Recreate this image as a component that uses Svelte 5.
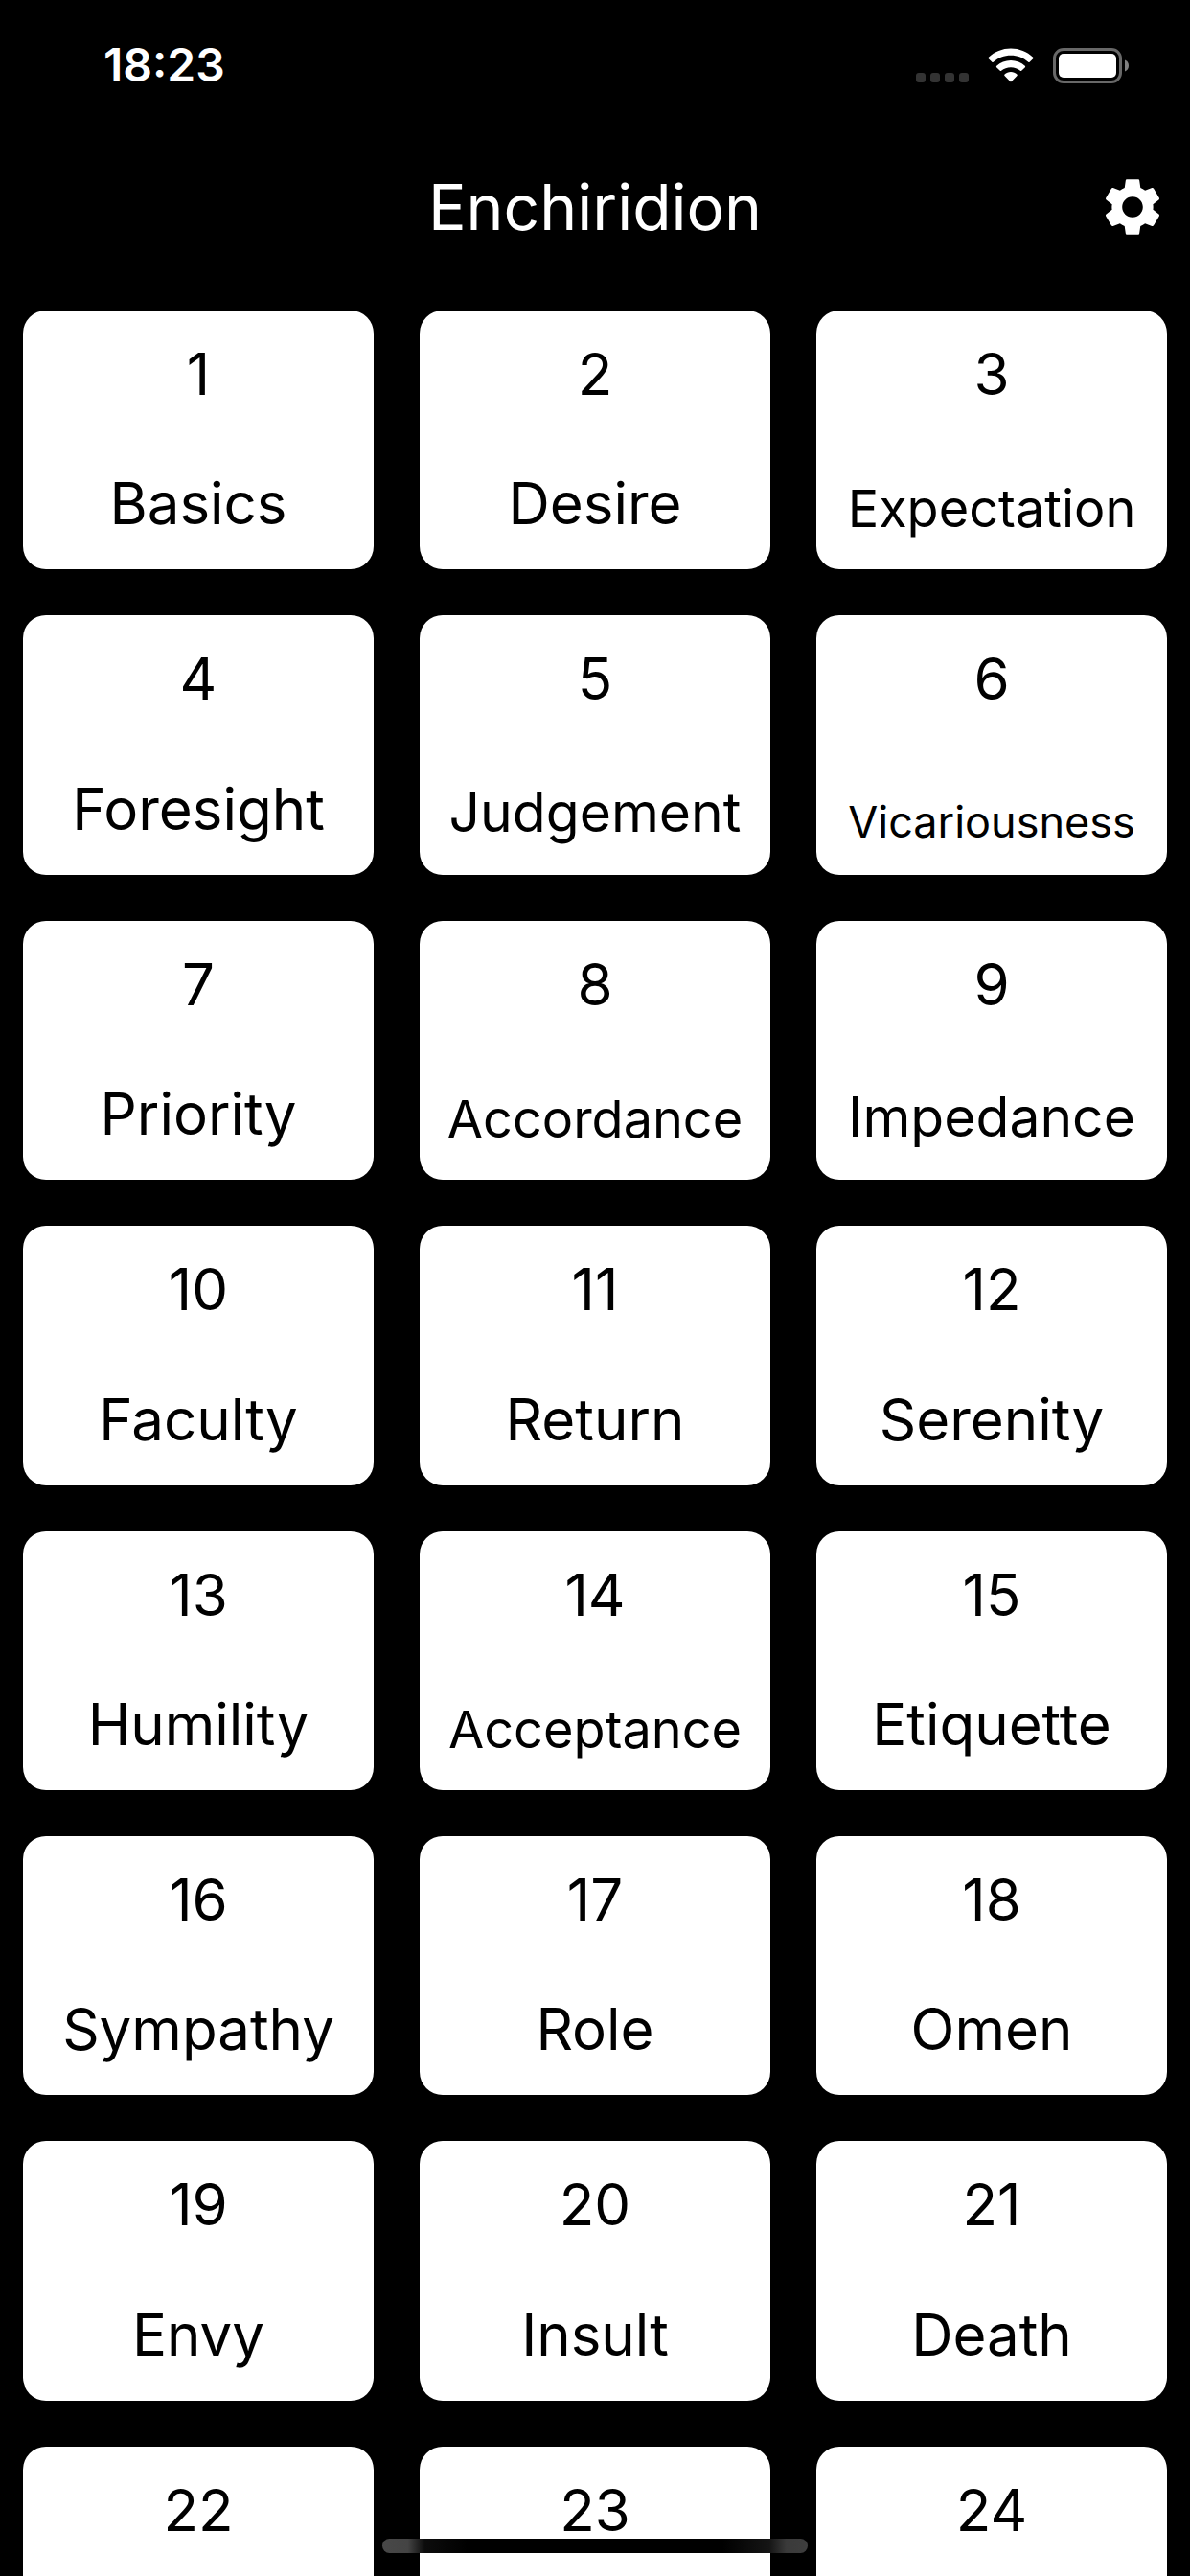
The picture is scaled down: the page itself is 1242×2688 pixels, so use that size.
<script>
  const chapters = [
    { title: 'Basics' },
    { title: 'Desire' },
    { title: 'Expectation', size: 'small' },
    { title: 'Foresight' },
    { title: 'Judgement', size: 'medium' },
    { title: 'Vicariousness', size: 'tiny' },
    { title: 'Priority' },
    { title: 'Accordance', size: 'small' },
    { title: 'Impedance', size: 'medium' },
    { title: 'Faculty' },
    { title: 'Return' },
    { title: 'Serenity' },
    { title: 'Humility' },
    { title: 'Acceptance', size: 'small' },
    { title: 'Etiquette' },
    { title: 'Sympathy' },
    { title: 'Role' },
    { title: 'Omen' },
    { title: 'Envy' },
    { title: 'Insult' },
    { title: 'Death' },
    { title: '' },
    { title: '' },
    { title: '' }
  ];
</script>

<div class="screen">
  <div class="status">
    <time class="clock">18:23</time>
    <div class="indicators">
      <svg class="signal" viewBox="0 0 55 37" aria-hidden="true">
        <rect x="0" y="26" width="10" height="10" rx="3" />
        <rect x="15" y="26" width="10" height="10" rx="3" />
        <rect x="30" y="26" width="10" height="10" rx="3" />
        <rect x="45" y="26" width="10" height="10" rx="3" />
      </svg>
      <svg class="wifi" viewBox="0 0 48 37" aria-hidden="true">
        <path d="M24 0.4C32.8 0.4 41 3.8 47.2 9.7Q48 10.4 47.2 11.2L43.6 14.8Q43 15.4 42.3 14.8C37.3 10.3 30.9 7.8 24 7.8S10.7 10.3 5.7 14.8Q5 15.4 4.4 14.8L0.8 11.2Q0 10.4 0.8 9.7C7 3.8 15.2 0.4 24 0.4Z" />
        <path d="M24 12.9C29.6 12.9 34.8 15 38.8 18.7Q39.6 19.4 38.9 20.2L35.2 23.8Q34.6 24.4 33.9 23.8C31.2 21.5 27.8 20.2 24 20.2S16.8 21.5 14.1 23.8Q13.4 24.4 12.8 23.8L9.1 20.2Q8.4 19.4 9.2 18.7C13.2 15 18.4 12.9 24 12.9Z" />
        <path d="M24 25.1C26.5 25.1 28.7 26 30.4 27.5Q31.3 28.3 30.5 29.1L24.7 35Q24 35.7 23.3 35L17.5 29.1Q16.7 28.3 17.6 27.5C19.3 26 21.5 25.1 24 25.1Z" />
      </svg>
      <svg class="battery" viewBox="0 0 80 37" aria-hidden="true">
        <rect x="1.5" y="1.5" width="69" height="34" rx="9.5" fill="none" stroke="#686868" stroke-width="3" />
        <rect x="6" y="6" width="60" height="25" rx="5" fill="#fff" />
        <path d="M75 12.5C77.6 13.5 79 15.7 79 18.5S77.6 23.5 75 24.5Z" fill="#808080" />
      </svg>
    </div>
  </div>

  <header class="bar">
    <h1>Enchiridion</h1>
    <button class="settings" aria-label="Settings">
      <svg viewBox="0 0 24 24" aria-hidden="true">
        <path d="M19.14,12.94c0.04-0.3,0.06-0.61,0.06-0.94c0-0.32-0.02-0.64-0.07-0.94l2.03-1.58c0.18-0.14,0.23-0.41,0.12-0.61l-1.92-3.32c-0.12-0.22-0.37-0.29-0.59-0.22l-2.39,0.96c-0.5-0.38-1.03-0.7-1.62-0.94L14.4,2.81c-0.04-0.24-0.24-0.41-0.48-0.41h-3.84c-0.24,0-0.43,0.17-0.47,0.41L9.25,5.35C8.66,5.59,8.12,5.92,7.63,6.29L5.24,5.33c-0.22-0.08-0.47,0-0.59,0.22L2.74,8.87C2.62,9.08,2.66,9.34,2.86,9.48l2.03,1.58C4.84,11.36,4.8,11.69,4.8,12s0.02,0.64,0.07,0.94l-2.03,1.58c-0.18,0.14-0.23,0.41-0.12,0.61l1.92,3.32c0.12,0.22,0.37,0.29,0.59,0.22l2.39-0.96c0.5,0.38,1.03,0.7,1.62,0.94l0.36,2.54c0.05,0.24,0.24,0.41,0.48,0.41h3.84c0.24,0,0.44-0.17,0.47-0.41l0.36-2.54c0.59-0.24,1.13-0.56,1.62-0.94l2.39,0.96c0.22,0.08,0.47,0,0.59-0.22l1.92-3.32c0.12-0.22,0.07-0.47-0.12-0.61L19.14,12.94z M12,15.6c-1.98,0-3.6-1.62-3.6-3.6s1.62-3.6,3.6-3.6s3.6,1.62,3.6,3.6S13.98,15.6,12,15.6z" />
      </svg>
    </button>
  </header>

  <main class="grid">
    {#each chapters as chapter, i}
      <button class="card">
        <span class="number">{i + 1}</span>
        <span class="title {chapter.size ?? ''}">{chapter.title}</span>
      </button>
    {/each}
  </main>

  <div class="home"></div>
</div>

<style>
  :global(body) {
    background: #000;
  }

  .screen {
    position: relative;
    display: flex;
    flex-direction: column;
    height: 100vh;
    overflow: hidden;
    background: #000;
    color: #fff;
    font-family: Inter, Roboto, sans-serif;
  }

  .status {
    display: flex;
    flex: none;
    align-items: center;
    justify-content: space-between;
    height: 136px;
    padding: 0 63px 0 108px;
  }

  .clock {
    font-size: 48px;
    line-height: 56px;
    font-weight: 600;
  }

  .indicators {
    display: flex;
    align-items: center;
    gap: 20px;
  }

  .indicators svg {
    display: block;
    height: 37px;
  }

  .signal {
    width: 55px;
    fill: #333;
  }

  .wifi {
    width: 48px;
    fill: #fff;
  }

  .battery {
    width: 80px;
  }

  .bar {
    display: grid;
    flex: none;
    grid-template-columns: 72px 1fr 72px;
    align-items: center;
    height: 160px;
    padding: 0 24px;
  }

  h1 {
    grid-column: 2;
    margin: 0;
    font-size: 66px;
    line-height: 80px;
    font-weight: 400;
    text-align: center;
  }

  button {
    margin: 0;
    padding: 0;
    border: 0;
    background: none;
    color: inherit;
    font: inherit;
    cursor: pointer;
  }

  .settings svg {
    display: block;
    width: 72px;
    height: 72px;
    fill: #fff;
  }

  .grid {
    display: grid;
    flex: 1;
    grid-template-columns: repeat(3, 1fr);
    align-content: start;
    gap: 48px;
    min-height: 0;
    padding: 28px 24px;
    overflow: hidden;
  }

  .card {
    display: flex;
    flex-direction: column;
    align-items: center;
    justify-content: space-between;
    min-width: 0;
    aspect-ratio: 1.3535;
    padding: 16px 24px 19px;
    border-radius: 24px;
    background: #fff;
    color: #000;
  }

  .number,
  .title {
    font-size: 60px;
    line-height: 100px;
    white-space: nowrap;
  }

  .title.medium {
    font-size: 57px;
    line-height: 92px;
  }

  .title.small {
    font-size: 54px;
    line-height: 88px;
  }

  .title.tiny {
    font-size: 45px;
    line-height: 72px;
  }

  .home {
    position: absolute;
    bottom: 24px;
    left: 50%;
    width: 444px;
    height: 15px;
    border-radius: 8px;
    background: linear-gradient(
      to right,
      #484848 0%,
      #444 6%,
      #0c0c0c 10%,
      #000 20%,
      #000 80%,
      #151515 91%,
      #3a3a3a 95%,
      #3e3e3e 100%
    );
    transform: translateX(-50%);
  }
</style>
